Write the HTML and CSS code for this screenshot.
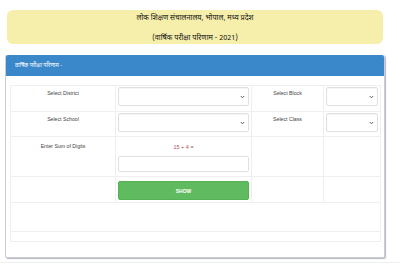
FILE: index.html
```html
<!DOCTYPE html>
<html>
<head>
<meta charset="utf-8">
<link rel="stylesheet" href="styles.css">
</head>
<body>
<div class="title-box">
  <div class="t1">लोक शिक्षण संचालनालय, भोपाल, मध्य प्रदेश</div>
  <div class="t2">(वार्षिक परीक्षा परिणाम - 2021)</div>
</div>
<div class="panel">
  <div class="panel-head">वार्षिक परीक्षा परिणाम -</div>
  <div class="panel-body">
    <table class="grid">
      <colgroup>
        <col class="c1"><col class="c2"><col class="c3"><col class="c4">
      </colgroup>
      <tr class="r1">
        <td class="lbl">Select District</td>
        <td class="fld"><div class="sel"><svg width="5" height="4" viewBox="0 0 5 4"><path d="M0.8 1 L2.5 2.8 L4.2 1" fill="none" stroke="#555" stroke-width="0.9"/></svg></div></td>
        <td class="lbl">Select Block</td>
        <td class="fld"><div class="sel"><svg width="5" height="4" viewBox="0 0 5 4"><path d="M0.8 1 L2.5 2.8 L4.2 1" fill="none" stroke="#555" stroke-width="0.9"/></svg></div></td>
      </tr>
      <tr class="r2">
        <td class="lbl">Select School</td>
        <td class="fld"><div class="sel"><svg width="5" height="4" viewBox="0 0 5 4"><path d="M0.8 1 L2.5 2.8 L4.2 1" fill="none" stroke="#555" stroke-width="0.9"/></svg></div></td>
        <td class="lbl">Select Class</td>
        <td class="fld"><div class="sel"><svg width="5" height="4" viewBox="0 0 5 4"><path d="M0.8 1 L2.5 2.8 L4.2 1" fill="none" stroke="#555" stroke-width="0.9"/></svg></div></td>
      </tr>
      <tr class="r3">
        <td class="lbl lbl3">Enter Sum of Digits</td>
        <td class="fld fld3">
          <div class="captcha">15 + 4 =</div>
          <div class="inp"></div>
        </td>
        <td></td>
        <td></td>
      </tr>
      <tr class="r4">
        <td></td>
        <td class="fld"><div class="btn">SHOW</div></td>
        <td></td>
        <td></td>
      </tr>
      <tr class="r5"><td colspan="4"></td></tr>
      <tr class="r6"><td colspan="4"></td></tr>
    </table>
  </div>
</div>
<div class="foot-line"></div>
</body>
</html>
```

FILE: styles.css
```css
html, body {
  margin: 0;
  padding: 0;
  background: #ffffff;
}
body {
  font-family: "Liberation Sans", "Noto Sans Devanagari", "Lohit Devanagari", sans-serif;
  color: #333;
  padding-top: 10px;
}
.title-box {
  margin-left: 7px;
  width: 376px;
  height: 34px;
  background: #f6efac;
  border-radius: 6px;
  display: flex;
  flex-direction: column;
  align-items: center;
  font-family: "Noto Sans Devanagari", "Lohit Devanagari", "Liberation Sans", sans-serif;
  font-size: 7.3px;
  color: #111;
}
.t1 {
  margin-top: 2px;
  line-height: 12px;
}
.t2 {
  margin-top: 9px;
  line-height: 10px;
}
.panel {
  margin-left: 5px;
  margin-top: 11px;
  width: 378px;
  height: 202px;
  border: 1px solid #c9ccd3;
  border-top: none;
  border-radius: 2px;
  box-shadow: 1px 1px 1px #b5b9c4;
  background: #fff;
}
.panel-head {
  background: #3a87c9;
  height: 21px;
  color: #fff;
  font-family: "Noto Sans Devanagari", "Lohit Devanagari", "Liberation Sans", sans-serif;
  font-size: 5.5px;
  line-height: 21px;
  padding-left: 9px;
  border-radius: 2px 2px 0 0;
}
.panel-body {
  padding: 9px 5px 0 4px;
}
.grid {
  border-collapse: collapse;
  width: 370px;
  table-layout: fixed;
}
.c1 { width: 105px; }
.c2 { width: 136px; }
.c3 { width: 72px; }
.c4 { width: 57px; }
.grid td {
  border: 1px solid #efefef;
  padding: 0;
  vertical-align: top;
}
.r1 { height: 26px; }
.r2 { height: 25px; }
.r3 { height: 40px; }
.r4 { height: 26px; }
.r5 { height: 29px; }
.r6 { height: 10px; }
.lbl {
  text-align: center;
  font-size: 5.2px;
  color: #444;
  padding-top: 4px !important;
  line-height: 7px;
}
.lbl3 {
  padding-top: 6px !important;
}
.fld {
  padding: 1px 2px 0 2px !important;
}
.sel {
  height: 17px;
  border: 1px solid #e0e0e0;
  border-radius: 2px;
  box-shadow: inset 0 1px 1px rgba(0,0,0,0.04);
  display: flex;
  align-items: center;
  justify-content: flex-end;
  padding-right: 3px;
  background: #fff;
}
.fld3 {
  padding-top: 6px !important;
}
.captcha {
  text-align: center;
  font-size: 5.5px;
  color: #b2505c;
  line-height: 8px;
}
.inp {
  margin-top: 5px;
  height: 14px;
  border: 1px solid #e0e0e0;
  border-radius: 2px;
}
.btn {
  margin-top: 3px;
  height: 17px;
  background: #60bb60;
  border: 1px solid #55b155;
  border-radius: 2px;
  color: #fff;
  font-size: 5px;
  font-weight: bold;
  display: flex;
  align-items: center;
  justify-content: center;
}
.foot-line {
  margin-top: 4px;
  height: 1px;
  background: #eeeeee;
}
```
